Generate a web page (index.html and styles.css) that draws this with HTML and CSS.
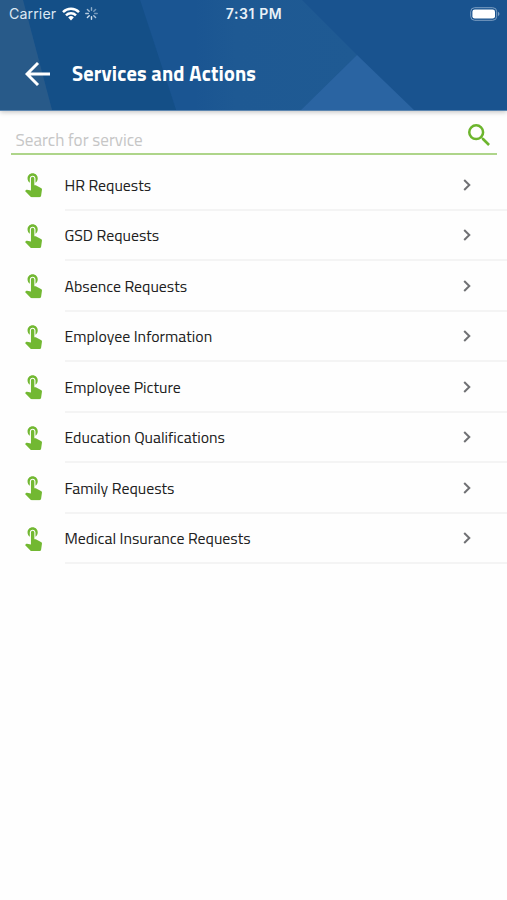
FILE: index.html
```html
<!DOCTYPE html>
<html lang="en">
<head>
<meta charset="utf-8">
<title>Services and Actions</title>
<link rel="stylesheet" href="styles.css">
</head>
<body>
<svg class="defs" width="0" height="0" aria-hidden="true">
<symbol id="touch" viewBox="4.75 3 15.02 21"><path d="M9 11.24V7.5C9 6.12 10.12 5 11.5 5S14 6.12 14 7.5v3.74c1.21-.81 2-2.18 2-3.74C16 5.01 13.99 3 11.5 3S7 5.01 7 7.5c0 1.56.79 2.93 2 3.74zm9.84 4.63l-4.54-2.26c-.17-.07-.35-.11-.54-.11H13v-6c0-.83-.67-1.5-1.5-1.5S10 6.67 10 7.5v10.74l-3.43-.72c-.08-.01-.15-.03-.24-.03-.31 0-.59.13-.79.33l-.79.8 4.94 4.94c.27.27.65.44 1.06.44h6.79c.75 0 1.33-.55 1.44-1.28l.75-5.27c.01-.07.02-.14.02-.2 0-.62-.38-1.16-.91-1.38z"/></symbol>
<symbol id="chevron" viewBox="0 0 8 12"><path d="M1.2 1 6.3 6 1.2 11" fill="none" stroke="currentColor" stroke-width="2"/></symbol>
</svg>
<header class="header">
<svg class="backdrop" viewBox="0 0 507 110" preserveAspectRatio="none" aria-hidden="true">
<defs><linearGradient id="fold"><stop offset="0" stop-color="#1a5592"/><stop offset=".25" stop-color="#1e5993"/><stop offset="1" stop-color="#1f5a93"/></linearGradient></defs>
<path fill="#19538f" d="M0 0h507v110H0z"/>
<path fill="url(#fold)" d="M195 0h107l55 55-56 55H195z"/>
<path fill="#1a5592" d="M140 0h57v110h-21z"/>
<path fill="#144f87" d="M23 0h117l36 110H52z"/>
<path fill="#285a89" d="M0 0h23l29 110H0z"/>
<path fill="#2a64a2" d="M357 55l57 55H301z"/>
</svg>
<div class="status">
<div class="carrier"><span>Carrier</span>
<svg class="wifi" viewBox="0 0 18 14" aria-hidden="true"><g fill="none" stroke="#fff" stroke-width="2.5"><path d="M1 5.1a11.5 11.5 0 0 1 16 0"/><path d="M4 8.3a7.2 7.2 0 0 1 10 0"/></g><path fill="#fff" d="M6.2 10.4a4 4 0 0 1 5.6 0L9 13.4z"/></svg>
<svg class="spinner" viewBox="0 0 12 12" aria-hidden="true"><g stroke="#d3e1ef" stroke-width="1.3" stroke-linecap="round"><path d="M6 .7v2.4" opacity=".65"/><path d="M9.8 2.2 8.1 3.9" opacity=".5"/><path d="M11.3 6H8.9" opacity=".5"/><path d="M9.8 9.8 8.1 8.1" opacity=".8"/><path d="M6 11.3V8.9"/><path d="M2.2 9.8l1.7-1.7"/><path d="M.7 6h2.4" opacity=".85"/><path d="M2.2 2.2l1.7 1.7" opacity=".75"/></g></svg>
</div>
<div class="time">7:31 PM</div>
<svg class="battery" viewBox="0 0 30 14" aria-hidden="true"><rect x=".7" y=".7" width="26" height="12.6" rx="4" fill="none" stroke="#7d9fc2"/><rect x="2.4" y="2.4" width="22.6" height="9.2" rx="2.4" fill="#fff"/><path fill="#7d9fc2" d="M28 4.8q3 2.2 0 4.4z"/></svg>
</div>
<div class="bar">
<svg class="back" viewBox="0 0 25 24" aria-hidden="true"><path d="M25 12H2M13 1 2 12l11 11" fill="none" stroke="#fff" stroke-width="2.9"/></svg>
<h1 class="title">Services and Actions</h1>
</div>
</header>
<main>
<div class="search"><span class="placeholder">Search for service</span>
<svg class="magnifier" viewBox="3 3 17.5 17.5" aria-hidden="true"><path d="M15.5 14h-.79l-.28-.27A6.47 6.47 0 0 0 16 9.5 6.5 6.5 0 1 0 9.5 16c1.61 0 3.09-.59 4.23-1.57l.27.28v.79l5 4.99L20.49 19l-4.99-5zm-6 0a4.5 4.5 0 1 1 0-9 4.5 4.5 0 0 1 0 9z"/></svg>
</div>
<ul class="list">
<li class="row"><svg class="touch"><use href="#touch"/></svg><div class="item"><span>HR Requests</span><svg class="chevron"><use href="#chevron"/></svg></div></li>
<li class="row"><svg class="touch"><use href="#touch"/></svg><div class="item"><span>GSD Requests</span><svg class="chevron"><use href="#chevron"/></svg></div></li>
<li class="row"><svg class="touch"><use href="#touch"/></svg><div class="item"><span>Absence Requests</span><svg class="chevron"><use href="#chevron"/></svg></div></li>
<li class="row"><svg class="touch"><use href="#touch"/></svg><div class="item"><span>Employee Information</span><svg class="chevron"><use href="#chevron"/></svg></div></li>
<li class="row"><svg class="touch"><use href="#touch"/></svg><div class="item"><span>Employee Picture</span><svg class="chevron"><use href="#chevron"/></svg></div></li>
<li class="row"><svg class="touch"><use href="#touch"/></svg><div class="item"><span>Education Qualifications</span><svg class="chevron"><use href="#chevron"/></svg></div></li>
<li class="row"><svg class="touch"><use href="#touch"/></svg><div class="item"><span>Family Requests</span><svg class="chevron"><use href="#chevron"/></svg></div></li>
<li class="row"><svg class="touch"><use href="#touch"/></svg><div class="item"><span>Medical Insurance Requests</span><svg class="chevron"><use href="#chevron"/></svg></div></li>
</ul>
</main>
</body>
</html>
```
FILE: styles.css
```css
* { box-sizing: border-box; }
body { margin: 0; min-height: 900px; background: #fefefe; color: #202020; font-family: "Titillium Web", Cairo, Roboto, sans-serif; }
svg { display: block; flex: none; }
.defs { position: absolute; }
.header { position: relative; height: 111px; color: #fff; border-bottom: 1px solid #5c86b0; box-shadow: 0 1px 5px rgba(0, 0, 0, .25); }
.backdrop { position: absolute; inset: 0; width: 100%; height: 100%; z-index: -1; }
.status { display: grid; grid-template-columns: 1fr auto 1fr; align-items: center; height: 27px; padding: 0 7px 0 9px; font: 14.2px/27px Inter, sans-serif; }
.carrier { display: flex; align-items: center; color: #dce8f3; }
.carrier span { width: 53px; letter-spacing: .1px; }
.wifi { width: 18px; height: 14px; }
.spinner { width: 13px; height: 13px; margin-left: 5px; }
.time { font-weight: 600; font-size: 14px; letter-spacing: .6px; color: #e9f1f8; margin-right: 1px; }
.battery { width: 30px; height: 14px; justify-self: end; }
.bar { display: flex; align-items: center; height: 83px; padding: 11px 0 0 25px; }
.back { width: 25px; height: 24px; }
.title { margin: 0 0 0 22px; font-size: 20.4px; line-height: 24px; font-weight: 700; letter-spacing: .15px; }
.search { display: flex; justify-content: space-between; align-items: flex-start; height: 44px; margin: 0 10px 0 11px; padding: 13px 7px 0 4.5px; border-bottom: 2px solid #aed58a; }
.placeholder { margin-top: 4px; font-size: 17.1px; line-height: 24px; color: #c6c6c6; }
.magnifier { width: 22px; height: 22px; fill: #6cb52d; }
.list { list-style: none; margin: 5px 0 0; padding: 0; }
.row { display: flex; align-items: center; height: 50.5px; padding-left: 25px; }
.touch { width: 17px; height: 24.5px; fill: #72b832; }
.item { display: flex; flex: 1; align-items: center; justify-content: space-between; height: 100%; margin-left: 22.5px; padding: 1.2px 36px 0 0; border-bottom: 2px solid #f4f4f4; font-size: 15.85px; }
.chevron { width: 8px; height: 12px; color: #707174; }
```
